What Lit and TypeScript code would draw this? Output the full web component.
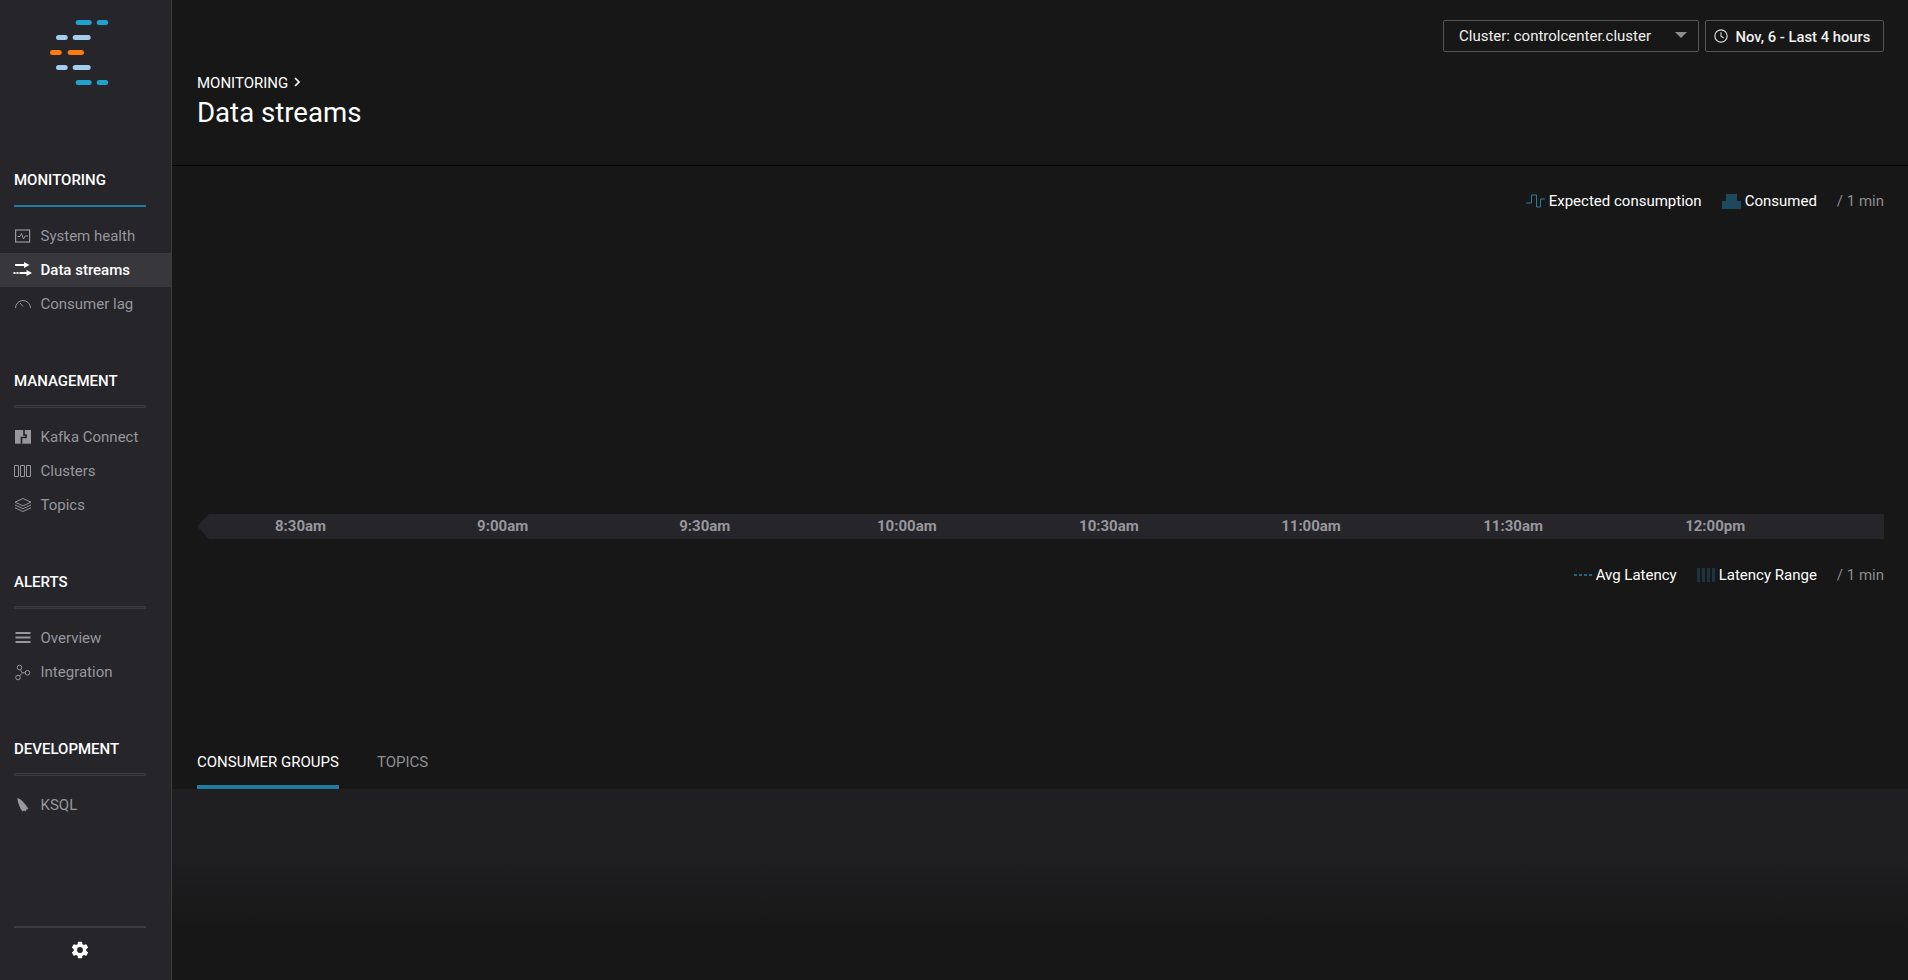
import { LitElement, html, css, svg } from "lit";
import { customElement } from "lit/decorators.js";

const icons: Record<string, any> = {
  health: svg`<rect x="1.6" y="2" width="14" height="12" fill="none" stroke="currentColor" stroke-width="1.2"/><path d="M3.5 8.5h2.5l1.5-3 2 5.5 1.5-3h3" fill="none" stroke="currentColor" stroke-width="1"/>`,
  streams: svg`<path d="M1 3h10M-.5 11h2M2.5 11h2M5.5 11h7.5" stroke="currentColor" stroke-width="1.8" fill="none"/><path d="M10 0l5.5 3-5.5 3zM12.5 8l5.5 3-5.5 3z" fill="currentColor"/>`,
  lag: svg`<path d="M1.5 12a7.5 7.5 0 0 1 15 0" fill="none" stroke="currentColor" stroke-width="1"/><path d="M6 7l3 3.5" stroke="currentColor" stroke-width="1"/>`,
  connect: svg`<rect x="1" y="1" width="16" height="13.7" fill="currentColor"/><path d="M10 1v5h2v2.5H7.5v6.2" fill="none" stroke="#25252a" stroke-width="1.7"/>`,
  clusters: svg`<path d="M.5 2.5h4v11h-4zM6.5 2.5h4v11h-4zM12.5 2.5h4v11h-4z" fill="none" stroke="currentColor" stroke-width="1"/>`,
  topics: svg`<path d="M9 1.5l8 3.7-8 3.7L1 5.2z" fill="none" stroke="currentColor" stroke-width="1"/><path d="M1 8l8 3.7L17 8M1 10.8l8 3.7 8-3.7" fill="none" stroke="currentColor" stroke-width="1"/>`,
  overview: svg`<path d="M1.5 3h15M1.5 7.5h15M1.5 12h15" stroke="currentColor" stroke-width="2"/>`,
  integration: svg`<circle cx="5.5" cy="3.5" r="2.3" fill="none" stroke="currentColor"/><circle cx="13.5" cy="8.8" r="2.3" fill="none" stroke="currentColor"/><circle cx="4" cy="13.5" r="2.3" fill="none" stroke="currentColor"/><path d="M6.5 5.5l1.3 3.2M11.2 8.8H8M7.8 9.5l-2.4 2.5" stroke="currentColor" fill="none"/>`,
  ksql: svg`<path d="M3.3 1C7 2 11 6 14.5 12L12.5 12.5 11.5 14.5 10 13.5 8.5 14.5C6.5 12 4 7 3.3 1z" fill="currentColor"/>`,
};

const groups = [
  { title: "MONITORING", on: true, items: [["health", "System health"], ["streams", "Data streams", true], ["lag", "Consumer lag"]] },
  { title: "MANAGEMENT", items: [["connect", "Kafka Connect"], ["clusters", "Clusters"], ["topics", "Topics"]] },
  { title: "ALERTS", items: [["overview", "Overview"], ["integration", "Integration"]] },
  { title: "DEVELOPMENT", items: [["ksql", "KSQL"]] },
] as any[];

const times = ["8:30am", "9:00am", "9:30am", "10:00am", "10:30am", "11:00am", "11:30am", "12:00pm"];

@customElement("app-root")
export class AppRoot extends LitElement {
  static styles = css`
    :host { display: block; width: 1908px; height: 980px; overflow: hidden; font-family: Roboto, "Liberation Sans", sans-serif; font-size: 15px; color: #fff; background: #171717; }
    .app { display: flex; height: 980px; }
    .side { width: 171px; flex: none; background: #25252a; border-right: 1px solid #3a3a3f; display: flex; flex-direction: column; }
    .logo { height: 170px; flex: none; padding: 20px 0 0 50px; box-sizing: border-box; }
    .logo svg { display: block; }
    .groups { flex: 1; }
    .group { margin-bottom: 50px; }
    .gtitle { height: 20px; line-height: 20px; margin-left: 14px; font-weight: 500; }
    .gline { height: 3px; box-sizing: border-box; margin: 14px 25px 12px 14px; background: #2d2d33; border: 1px solid #3b3b40; }
    .on .gline { height: 2px; margin-top: 15px; background: #207c9f; border: 0; }
    .item { height: 34px; display: flex; align-items: center; padding-left: 14px; color: #97979c; }
    .item svg { width: 18px; height: 16px; flex: none; margin-right: 8.5px; overflow: visible; }
    .item.active { background: #37373c; color: #fff; font-weight: 500; }
    .foot { margin: 0 25px 0 14px; border-top: 2px solid #3b3b40; height: 54px; display: flex; justify-content: center; box-sizing: border-box; padding-top: 12px; }
    .main { flex: 1; min-width: 0; display: flex; flex-direction: column; }
    .head { flex: none; box-sizing: border-box; border-bottom: 1px solid #000; height: 166px; padding: 20px 24px 0 25px; }
    .controls { display: flex; justify-content: flex-end; gap: 6px; height: 32px; }
    .btn { box-sizing: border-box; height: 32px; border: 1px solid #55555a; border-radius: 2px; display: flex; align-items: center; color: #f0f0f0; }
    .sel { width: 256px; padding: 0 11px 0 15px; justify-content: space-between; }
    .caret { width: 0; height: 0; border: 6px solid transparent; border-top: 6px solid #8d8d8d; border-bottom: 0; margin-top: -2px; }
    .date { width: 179px; padding-left: 8px; gap: 7.5px; font-weight: 500; font-size: 14.8px; }
    .date span { margin-top: 2px; }
    .crumb { margin-top: 21px; line-height: 20px; display: flex; align-items: center; gap: 6px; }
    .crumb svg { margin-top: -3px; }
    h1 { margin: 2px 0 0; font-weight: 400; font-size: 27.6px; line-height: 36px; }
    .body { padding: 0 24px 0 25px; }
    .legend { display: flex; justify-content: flex-end; align-items: center; height: 20px; }
    .l1 { margin-top: 25px; }
    .l2 { margin-top: 26px; }
    .li { display: flex; align-items: center; gap: 4px; margin-right: 20px; }
    .unit { color: #8c8c90; }
    .axis { margin-top: 303px; height: 25px; background: #25252a; display: flex; font-weight: 700; color: #97979c; line-height: 25px; padding-left: 2.5px; clip-path: polygon(12px 0, 100% 0, 100% 100%, 12px 100%, 0 50%); }
    .tick { width: 202.1px; text-align: center; flex: none; }
    .tabs { margin-top: 158px; display: flex; gap: 38px; padding: 0 25px; height: 46px; box-sizing: border-box; flex: none; }
    .tab { color: #8f8f93; line-height: 38px; height: 46px; box-sizing: border-box; }
    .tab.active { color: #fff; border-bottom: 4px solid #207c9f; }
    .panel { flex: 1; background: linear-gradient(#1f1f22 0, #1f1f22 65px, #171717 140px); }
  `;

  render() {
    return html`<div class="app">
      <aside class="side">
        <div class="logo">
          <svg width="60" height="70" viewBox="0 0 60 70">
            ${[[25.7, 0, 16, "#1fa3ce"], [46.7, 0, 11.5, "#1fa3ce"], [6, 15, 11.7, "#a3cdec"], [22.7, 15, 18, "#a3cdec"], [0, 30, 11.7, "#ff7a0f"], [17.7, 30, 16.3, "#ff7a0f"], [6, 45, 11.7, "#a3cdec"], [22.7, 45, 18, "#a3cdec"], [25.7, 60, 16, "#1fa3ce"], [46.7, 60, 11.5, "#1fa3ce"]].map(
              ([x, y, w, c]) => svg`<rect x=${x} y=${y} width=${w} height="5" rx="2.5" fill=${c} />`
            )}
          </svg>
        </div>
        <div class="groups">
          ${groups.map(
            (g) => html`<section class="group ${g.on ? "on" : ""}">
              <div class="gtitle">${g.title}</div>
              <div class="gline"></div>
              ${g.items.map(
                (i: any) => html`<div class="item ${i[2] ? "active" : ""}"><svg viewBox="0 0 18 16">${icons[i[0]]}</svg>${i[1]}</div>`
              )}
            </section>`
          )}
        </div>
        <div class="foot">
          <svg width="20" height="20" viewBox="0 0 24 24"><path fill="#fff" d="M19.4 13c.04-.33.1-.66.1-1s-.06-.67-.1-1l2.1-1.65c.2-.15.25-.42.13-.64l-2-3.46c-.12-.22-.39-.3-.61-.22l-2.49 1c-.52-.4-1.08-.73-1.69-.98l-.38-2.65A.49.49 0 0 0 14 2h-4c-.25 0-.46.18-.49.42l-.38 2.65c-.61.25-1.17.59-1.69.98l-2.49-1c-.23-.09-.49 0-.61.22l-2 3.46c-.13.22-.07.49.12.64L4.57 11c-.04.33-.07.66-.07 1s.03.67.07 1l-2.11 1.65c-.19.15-.25.42-.12.64l2 3.46c.12.22.39.3.61.22l2.49-1c.52.4 1.08.73 1.69.98l.38 2.65c.03.24.24.42.49.42h4c.25 0 .46-.18.49-.42l.38-2.65c.61-.25 1.17-.59 1.69-.98l2.49 1c.23.09.49 0 .61-.22l2-3.46c.12-.22.07-.49-.13-.64zM12 15.5a3.5 3.5 0 1 1 0-7 3.5 3.5 0 0 1 0 7z"/></svg>
        </div>
      </aside>
      <main class="main">
        <header class="head">
          <div class="controls">
            <div class="btn sel"><span>Cluster: controlcenter.cluster</span><span class="caret"></span></div>
            <div class="btn date">
              <svg width="14" height="14" viewBox="0 0 15 15"><circle cx="7.5" cy="7.5" r="6.6" fill="none" stroke="#e0e0e0" stroke-width="1.2"/><path d="M7.5 3.5v4.2l3 2" fill="none" stroke="#e0e0e0" stroke-width="1.1"/></svg>
              <span>Nov, 6 - Last 4 hours</span>
            </div>
          </div>
          <div class="crumb">MONITORING <svg width="7" height="10" viewBox="0 0 7 10"><path d="M1 1l4 4-4 4" fill="none" stroke="#fff" stroke-width="1.7"/></svg></div>
          <h1>Data streams</h1>
        </header>
        <div class="body">
          <div class="legend l1">
            <div class="li">
              <svg width="19" height="15" viewBox="0 0 19 15"><path d="M0 9h5.5V1h5v12h4V5H19" fill="none" stroke="#24809f" stroke-width="1"/></svg>
              <span>Expected consumption</span>
            </div>
            <div class="li">
              <svg width="19" height="15" viewBox="0 0 19 15"><path d="M0 7h4V0h11v7h4v8H0z" fill="#1c4a5c"/></svg>
              <span>Consumed</span>
            </div>
            <div class="unit">/ 1 min</div>
          </div>
          <div class="axis">${times.map((t) => html`<div class="tick">${t}</div>`)}</div>
          <div class="legend l2">
            <div class="li">
              <svg width="18" height="4" viewBox="0 0 18 4"><path d="M0 2h18" stroke="#24809f" stroke-width="1.5" stroke-dasharray="3 2"/></svg>
              <span>Avg Latency</span>
            </div>
            <div class="li">
              <svg width="18" height="14" viewBox="0 0 18 14"><path d="M1.5 0v14M6.5 0v14M11.5 0v14M16.5 0v14" stroke="#1c3440" stroke-width="3"/></svg>
              <span>Latency Range</span>
            </div>
            <div class="unit">/ 1 min</div>
          </div>
        </div>
        <div class="tabs">
          <div class="tab active">CONSUMER GROUPS</div>
          <div class="tab">TOPICS</div>
        </div>
        <div class="panel"></div>
      </main>
    </div>`;
  }
}
